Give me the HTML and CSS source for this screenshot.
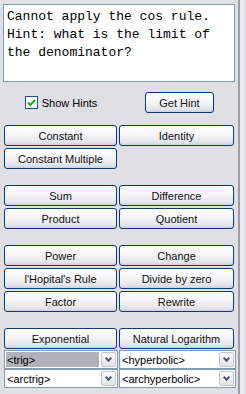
FILE: index.html
```html
<!DOCTYPE html>
<html lang="en">
<head>
  <meta charset="UTF-8" />
  <title>Limit Tutor</title>
  <link rel="stylesheet" href="styles.css">
</head>
<body>
  <div class="app">
    <div class="panel">
      <div class="hint-box">Cannot apply the cos rule.
Hint: what is the limit of
the denominator?</div>

      <div class="controls">
        <div class="cell">
          <label class="check">
            <span class="check-box">
              <svg width="11" height="11" viewBox="0 0 11 11">
                <path d="M2 5.5 L4.3 8 L9 2.8" fill="none" stroke="#21a121" stroke-width="2"/>
              </svg>
            </span>
            Show Hints
          </label>
        </div>
        <div class="cell">
          <button class="btn btn-hint">Get Hint</button>
        </div>
      </div>

      <div class="group">
        <button class="btn">Constant</button>
        <button class="btn">Identity</button>
        <button class="btn">Constant Multiple</button>
      </div>

      <div class="group">
        <button class="btn">Sum</button>
        <button class="btn">Difference</button>
        <button class="btn">Product</button>
        <button class="btn">Quotient</button>
      </div>

      <div class="group">
        <button class="btn">Power</button>
        <button class="btn">Change</button>
        <button class="btn">l'Hopital's Rule</button>
        <button class="btn">Divide by zero</button>
        <button class="btn">Factor</button>
        <button class="btn">Rewrite</button>
      </div>

      <div class="group last">
        <button class="btn">Exponential</button>
        <button class="btn">Natural Logarithm</button>
        <div class="combo">
          <span class="combo-text selected">&lt;trig&gt;</span>
          <span class="combo-arrow"></span>
        </div>
        <div class="combo">
          <span class="combo-text">&lt;hyperbolic&gt;</span>
          <span class="combo-arrow"></span>
        </div>
        <div class="combo lower">
          <span class="combo-text">&lt;arctrig&gt;</span>
          <span class="combo-arrow"></span>
        </div>
        <div class="combo lower">
          <span class="combo-text">&lt;archyperbolic&gt;</span>
          <span class="combo-arrow"></span>
        </div>
      </div>
    </div>
    <div class="divider"></div>
  </div>
</body>
</html>
```

FILE: styles.css
```css
body {
  margin: 0;
  background-color: #e0dfe3;
  font-family: "Liberation Sans", Arial, sans-serif;
  font-size: 11px;
  color: #000;
}
.app {
  display: flex;
  height: 394px;
}
.panel {
  width: 236px;
  padding: 4px 0 0 3px;
  box-sizing: border-box;
}
.divider {
  width: 2px;
  margin-left: 2px;
  background-color: #9d9da6;
  border-right: 4px solid #ebeaee;
}
.hint-box {
  width: 232px;
  height: 78px;
  box-sizing: border-box;
  border: 1px solid #7f9db9;
  background-color: #fff;
  padding: 3px 3px;
  font-family: "Liberation Mono", "Courier New", monospace;
  font-size: 13px;
  line-height: 18px;
  white-space: pre-wrap;
}
.controls {
  display: grid;
  grid-template-columns: 1fr 1fr;
  column-gap: 2px;
  width: 230px;
  margin: 10px 0 0 1px;
  height: 21px;
}
.cell {
  display: flex;
  align-items: center;
  justify-content: center;
}
.check {
  display: flex;
  align-items: center;
  gap: 4px;
}
.check-box {
  width: 11px;
  height: 11px;
  border: 1px solid #1c5180;
  background-color: #fff;
  display: flex;
}
.btn {
  height: 21px;
  margin: 0;
  padding: 0;
  border: 1px solid #0d3a72;
  border-radius: 3px;
  background: linear-gradient(#ffffff 0%, #f6f6f8 45%, #e4e4ec 85%, #cfcfda 100%);
  font-family: "Liberation Sans", Arial, sans-serif;
  font-size: 11px;
  color: #111;
}
.btn-hint {
  width: 69px;
  height: 21px;
  margin-left: 5px;
}
.group {
  display: grid;
  grid-template-columns: 113px 115px;
  gap: 2px;
  margin: 12px 0 0 1px;
  width: 230px;
}
.group.last {
  grid-template-columns: 114px 117px;
  column-gap: 1px;
  row-gap: 2px;
}
.group.last .btn:first-child {
  margin-right: 1px;
}
.group.last .btn:nth-child(2) {
  margin-right: 2px;
}
.group + .group {
  margin-top: 16px;
}
.controls + .group {
  margin-top: 12px;
}
.combo {
  display: flex;
  align-items: center;
  height: 19px;
  box-sizing: border-box;
  border: 1px solid #7f9db9;
  background-color: #fff;
  padding: 1px;
  margin-top: -1px;
}
.combo.lower {
  margin-top: -2px;
}
.combo-text {
  flex: 1;
  height: 100%;
  display: flex;
  align-items: center;
  padding-left: 1px;
  margin-right: 2px;
}
.combo-text.selected {
  background-color: #b1b0bb;
}
.combo-arrow {
  width: 15px;
  height: 15px;
  box-sizing: border-box;
  border: 1px solid #c6c5d0;
  border-radius: 2px;
  background: linear-gradient(#fbfbfc, #e3e3ea);
  position: relative;
}
.combo-arrow::after {
  content: "";
  position: absolute;
  left: 4px;
  top: 3px;
  width: 3px;
  height: 3px;
  border-right: 2px solid #4d5870;
  border-bottom: 2px solid #4d5870;
  transform: rotate(45deg);
}
```
